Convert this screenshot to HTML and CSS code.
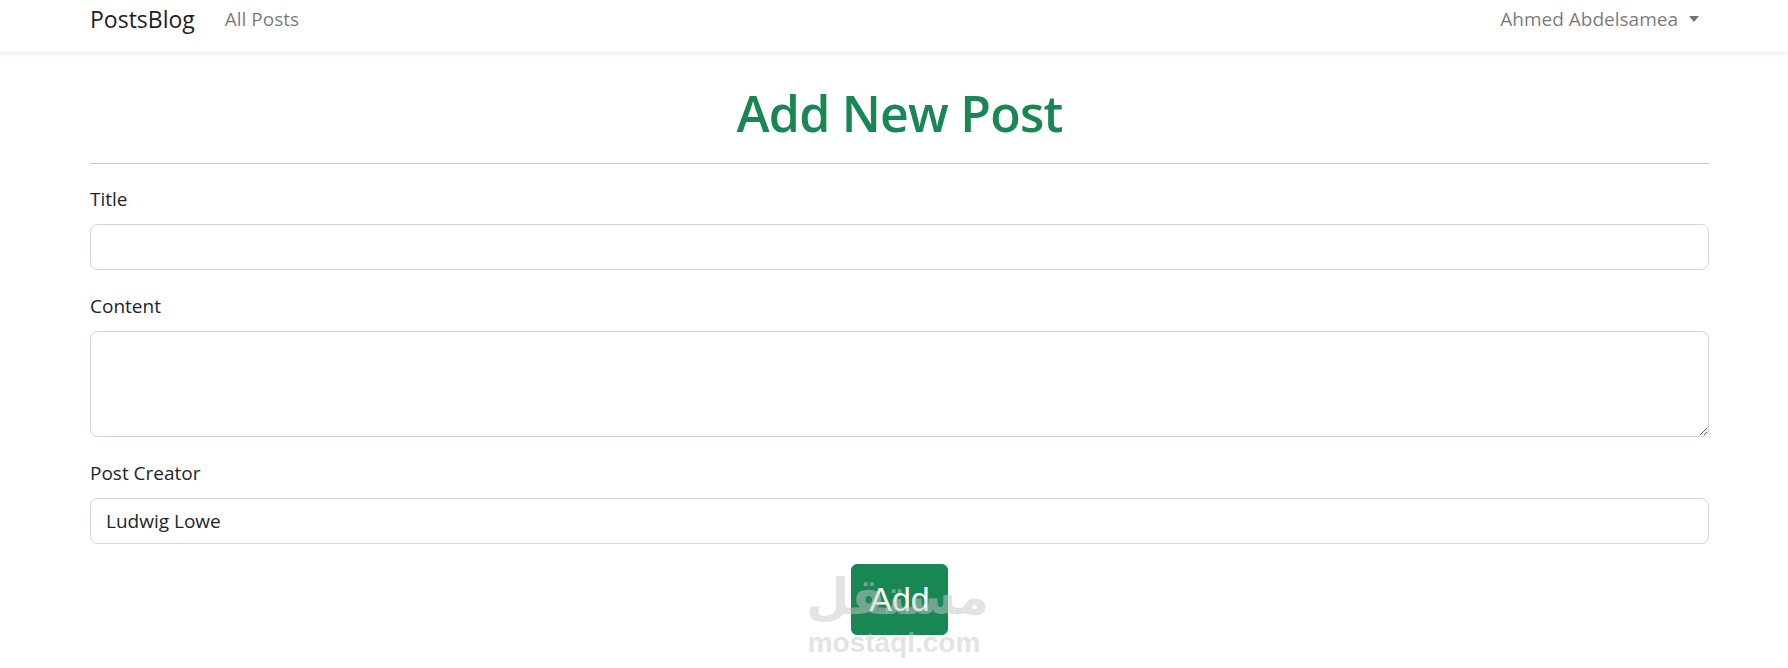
FILE: index.html
```html
<!DOCTYPE html>
<html lang="en">
<head>
  <meta charset="UTF-8" />
  <meta name="viewport" content="width=device-width, initial-scale=1.0"/>
  <title>Add New Post</title>
  <link rel="stylesheet" href="styles.css">
</head>
<body>
  <nav class="navbar">
    <div class="container nav-inner">
      <a class="brand" href="#">PostsBlog</a>
      <a class="nav-link" href="#">All Posts</a>
      <a class="nav-link user" href="#">Ahmed Abdelsamea<span class="caret"></span></a>
    </div>
  </nav>

  <main class="container">
    <h1 class="page-title">Add New Post</h1>
    <hr>
    <form class="post-form">
      <div class="field">
        <label for="title">Title</label>
        <input id="title" type="text" class="form-control">
      </div>
      <div class="field">
        <label for="content">Content</label>
        <textarea id="content" class="form-control" rows="3"></textarea>
      </div>
      <div class="field last">
        <label for="creator">Post Creator</label>
        <input id="creator" type="text" class="form-control" value="Ludwig Lowe">
      </div>
      <div class="actions">
        <button type="submit" class="btn-add">Add</button>
      </div>
    </form>
  </main>

  <div class="watermark">
    <div class="wm-ar">مستقل</div>
    <div class="wm-en">mostaql.com</div>
  </div>
</body>
</html>
```

FILE: styles.css
```css
body {
  margin: 0;
  font-family: "Open Sans", "Noto Sans", sans-serif;
  font-size: 19px;
  line-height: 1.5;
  color: #212529;
  background: #fff;
  position: relative;
  height: 668px;
  overflow: hidden;
}

a {
  text-decoration: none;
}

.container {
  width: 1619px;
  margin-left: 90px;
}

.navbar {
  height: 52px;
  background: #fff;
  box-shadow: 0 2px 5px rgba(0, 0, 0, 0.075);
}

.nav-inner {
  display: flex;
  align-items: center;
  padding-top: 4px;
}

.brand {
  font-size: 23px;
  line-height: 30px;
  color: rgba(0, 0, 0, 0.9);
  margin-right: 30px;
}

.nav-link {
  line-height: 30px;
  color: rgba(0, 0, 0, 0.55);
}

.user {
  margin-left: auto;
  padding-right: 10px;
  display: flex;
  align-items: center;
}

.caret {
  display: inline-block;
  margin-left: 11px;
  border-top: 6px solid rgba(0, 0, 0, 0.55);
  border-left: 5px solid transparent;
  border-right: 5px solid transparent;
}

.page-title {
  margin: 30px 0 0;
  text-align: center;
  font-size: 50px;
  line-height: 62px;
  letter-spacing: -0.8px;
  font-weight: 600;
  color: #198754;
}

hr {
  margin: 19px 0 20px;
  border: 0;
  border-top: 1px solid #c8c9ca;
}

.field {
  margin-bottom: 21px;
}

.field.last {
  margin-bottom: 20px;
}

label {
  display: block;
  margin-bottom: 10px;
  line-height: 30px;
}

.form-control {
  display: block;
  box-sizing: border-box;
  width: 100%;
  height: 46px;
  padding: 7px 15px;
  font-family: inherit;
  font-size: 19px;
  line-height: 30px;
  color: #212529;
  border: 1.25px solid #ced4da;
  border-radius: 7.5px;
  background: #fff;
  margin: 0;
}

textarea.form-control {
  height: 106px;
}

.actions {
  display: flex;
  justify-content: center;
}

.btn-add {
  font-family: "Liberation Sans", Arial, sans-serif;
  font-size: 34px;
  line-height: 51px;
  padding: 9px 17px;
  color: #fff;
  background: #198754;
  border: 1px solid #198754;
  border-radius: 6px;
  cursor: pointer;
}

.watermark {
  position: absolute;
  left: 50%;
  top: 567px;
  transform: translateX(-50%);
  width: 176px;
  text-align: center;
  color: rgba(200, 200, 200, 0.5);
  font-weight: bold;
  pointer-events: none;
}

.wm-ar {
  font-family: "DejaVu Sans", sans-serif;
  font-size: 50px;
  line-height: 60px;
}

.wm-en {
  font-family: "Liberation Sans", Arial, sans-serif;
  font-size: 28px;
  line-height: 28px;
  margin-top: 2px;
}
```
